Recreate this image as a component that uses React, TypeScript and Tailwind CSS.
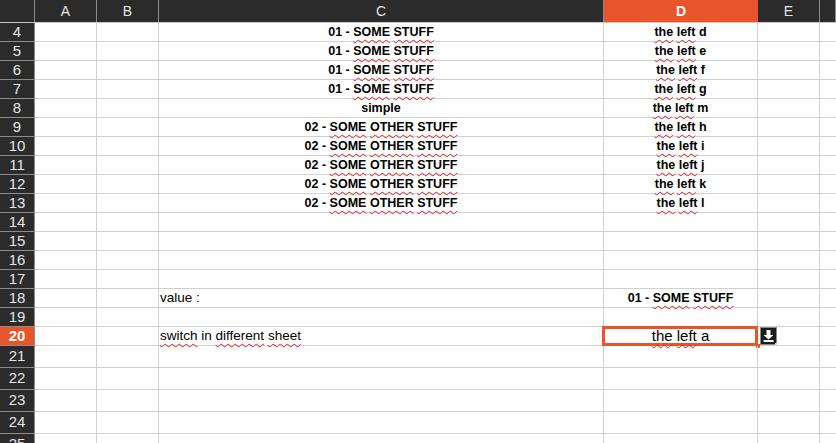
import React from 'react';

const cols = ['A', 'B', 'C', 'D', 'E', ''];
const colWidths = ['w-[62px]', 'w-[62px]', 'w-[445px]', 'w-[154px]', 'w-[62px]', 'flex-1'];

const SQUIGGLE = new Set(['SOME', 'STUFF', 'OTHER', 'the', 'left', 'switch', 'different', 'sheet']);

function Spell({ text }: { text: string }) {
  const words = text.split(' ');
  return (
    <span>
      {words.map((w, i) => (
        <React.Fragment key={i}>
          {SQUIGGLE.has(w) ? (
            <span className="underline decoration-wavy decoration-[#e02020] decoration-1 underline-offset-[3px]">{w}</span>
          ) : (
            w
          )}
          {i < words.length - 1 ? ' ' : ''}
        </React.Fragment>
      ))}
    </span>
  );
}

interface Row {
  n: number;
  c?: string;
  d?: string;
  cPlain?: boolean;
}

const rows: Row[] = [
  { n: 4, c: '01 - SOME STUFF', d: 'the left d' },
  { n: 5, c: '01 - SOME STUFF', d: 'the left e' },
  { n: 6, c: '01 - SOME STUFF', d: 'the left f' },
  { n: 7, c: '01 - SOME STUFF', d: 'the left g' },
  { n: 8, c: 'simple', d: 'the left m' },
  { n: 9, c: '02 - SOME OTHER STUFF', d: 'the left h' },
  { n: 10, c: '02 - SOME OTHER STUFF', d: 'the left i' },
  { n: 11, c: '02 - SOME OTHER STUFF', d: 'the left j' },
  { n: 12, c: '02 - SOME OTHER STUFF', d: 'the left k' },
  { n: 13, c: '02 - SOME OTHER STUFF', d: 'the left l' },
  { n: 14 },
  { n: 15 },
  { n: 16 },
  { n: 17 },
  { n: 18, c: 'value :', cPlain: true, d: '01 - SOME STUFF' },
  { n: 19 },
  { n: 20, c: 'switch in different sheet', cPlain: true, d: 'the left a' },
  { n: 21 },
  { n: 22 },
  { n: 23 },
  { n: 24 },
  { n: 25 },
];

function DropButton() {
  return (
    <div className="w-[17px] h-[18px] bg-[#1c1c1c] border border-[#8a8a8a] relative">
      <svg width="15" height="16" viewBox="0 0 15 16" className="block">
        <rect x="5.5" y="2" width="4" height="5" fill="#fff" />
        <polygon points="2.5,7 12.5,7 7.5,11.5" fill="#fff" />
        <rect x="2.5" y="12" width="10" height="2" fill="#fff" />
      </svg>
      <div className="absolute right-[-1px] bottom-[-1px] w-[2px] h-[2px] bg-[#e0e0e0]" />
    </div>
  );
}

export default function App() {
  return (
    <div className="w-[836px] h-[443px] overflow-hidden bg-white font-['Liberation_Sans',Arial,sans-serif] text-black">
      {/* column header */}
      <div className="flex h-[23px] bg-[#2b2b2b] border-b border-[#c8c8c8]">
        <div className="w-[35px] border-r border-[#8c8c8c]" />
        {cols.map((c, i) => (
          <div
            key={i}
            className={`${colWidths[i]} flex items-center justify-center text-[14px] ${
              c === 'D' ? 'bg-[#e8552a] text-white font-bold' : 'text-[#e4e4e4] border-r border-[#8c8c8c]'
            }`}
          >
            {c}
          </div>
        ))}
      </div>

      {rows.map((r) => {
        const sel = r.n === 20;
        const h = r.n >= 21 ? 'h-[22px]' : 'h-[19px]';
        return (
          <div key={r.n} className={`flex ${h}`}>
            <div
              className={`w-[35px] flex items-center justify-center text-[15px] border-r border-b border-[#8c8c8c] ${
                sel ? 'bg-[#e8552a] text-white font-bold' : 'bg-[#2b2b2b] text-[#e4e4e4]'
              }`}
            >
              {r.n}
            </div>
            <div className="w-[62px] border-r border-b border-[#d0d0d0]" />
            <div className="w-[62px] border-r border-b border-[#d0d0d0]" />
            <div
              className={`w-[445px] border-r border-b border-[#d0d0d0] flex items-center whitespace-nowrap ${
                r.cPlain ? 'justify-start pl-[1px] text-[13.5px]' : 'justify-center font-bold text-[12.5px]'
              }`}
            >
              {r.c && <Spell text={r.c} />}
            </div>
            <div className="w-[154px] border-r border-b border-[#d0d0d0] relative flex items-center justify-center whitespace-nowrap">
              {sel ? (
                <>
                  <div className="absolute left-[-2px] top-[-1px] right-[-1px] bottom-[-1px] border-[3px] border-[#e8552a]" />
                  <div className="absolute right-[-3px] bottom-[-3px] w-[4px] h-[4px] bg-[#e8552a]" />
                  <span className="text-[15px] relative">
                    <Spell text={r.d!} />
                  </span>
                </>
              ) : (
                r.d && (
                  <span className="font-bold text-[12.5px]">
                    <Spell text={r.d} />
                  </span>
                )
              )}
            </div>
            <div className="w-[62px] border-r border-b border-[#d0d0d0] flex items-center pl-[2px]">
              {sel && <DropButton />}
            </div>
            <div className="flex-1 border-b border-[#d0d0d0]" />
          </div>
        );
      })}
    </div>
  );
}
